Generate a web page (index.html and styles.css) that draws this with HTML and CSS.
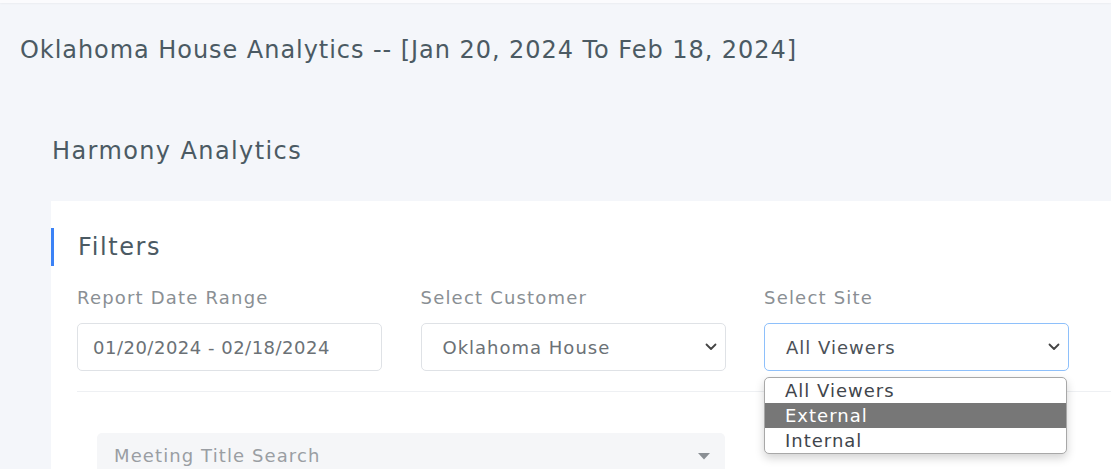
FILE: index.html
```html
<!DOCTYPE html>
<html>
<head>
<meta charset="utf-8">
<link rel="stylesheet" href="styles.css">
</head>
<body>
<div class="topline"></div>
<h1 class="page-title">Oklahoma House Analytics -- [Jan 20, 2024 To Feb 18, 2024]</h1>
<div class="section">
  <h2 class="section-title">Harmony Analytics</h2>
  <div class="card">
    <h3 class="card-title">Filters</h3>
    <div class="filters">
      <div class="field">
        <div class="label">Report Date Range</div>
        <div class="control date">01/20/2024 - 02/18/2024</div>
      </div>
      <div class="field">
        <div class="label">Select Customer</div>
        <div class="control select">
          <span class="sel-text">Oklahoma House</span>
          <svg class="chev" width="12" height="8" viewBox="0 0 12 8"><path d="M1.5 1.5 L6 6 L10.5 1.5" fill="none" stroke="#444" stroke-width="1.8" stroke-linecap="round" stroke-linejoin="round"/></svg>
        </div>
      </div>
      <div class="field site">
        <div class="label">Select Site</div>
        <div class="control select focused">
          <span class="sel-text">All Viewers</span>
          <svg class="chev" width="12" height="8" viewBox="0 0 12 8"><path d="M1.5 1.5 L6 6 L10.5 1.5" fill="none" stroke="#444" stroke-width="1.8" stroke-linecap="round" stroke-linejoin="round"/></svg>
        </div>
        <ul class="dropdown">
          <li>All Viewers</li>
          <li class="active">External</li>
          <li>Internal</li>
        </ul>
      </div>
    </div>
    <div class="divider"></div>
    <div class="search-row">
      <div class="search">
        <span class="placeholder">Meeting Title Search</span>
        <svg class="caret" width="12" height="7" viewBox="0 0 12 7"><path d="M0 0 L12 0 L6 6.5 Z" fill="#8a8f94"/></svg>
      </div>
    </div>
  </div>
</div>
</body>
</html>
```

FILE: styles.css
```css
* { box-sizing: border-box; }
html, body { margin: 0; padding: 0; }
body {
  background: #f4f6fa;
  font-family: "DejaVu Sans", "Open Sans", sans-serif;
  color: #4b5a63;
  width: 1111px;
  height: 469px;
  overflow: hidden;
}
.topline {
  height: 3px;
  background: #fbfbfd;
  box-shadow: 0 1px 2px rgba(0,0,0,0.04);
}
.page-title {
  margin: 0;
  padding: 32px 0 0 20px;
  font-size: 24px;
  letter-spacing: 0.95px;
  font-weight: 400;
  line-height: 30px;
  color: #4b5a63;
  white-space: nowrap;
}
.section {
  padding-left: 52px;
}
.section-title {
  margin: 0;
  padding-top: 71px;
  font-size: 24px;
  letter-spacing: 1.4px;
  font-weight: 400;
  line-height: 30px;
  color: #4b5a63;
}
.card {
  margin-top: 35px;
  margin-left: -1px;
  background: #fff;
  padding: 27px 0 0 0;
  height: 268px;
  overflow: hidden;
}
.card-title {
  margin: 0;
  border-left: 3px solid #3b82f6;
  padding-left: 24px;
  font-size: 24px;
  letter-spacing: 1.6px;
  font-weight: 400;
  line-height: 38px;
  color: #4b5a63;
}
.filters {
  display: grid;
  grid-template-columns: 305px 305px 305px;
  column-gap: 38.5px;
  padding-left: 26px;
  margin-top: 15px;
}
.field { position: relative; }
.label {
  font-size: 18px;
  letter-spacing: 1.2px;
  line-height: 34px;
  color: #8a8f94;
  white-space: nowrap;
}
.control {
  margin-top: 8px;
  height: 48px;
  border: 1px solid #dfe2e6;
  border-radius: 5px;
  display: flex;
  align-items: center;
  padding-left: 15px;
  font-size: 18px;
  letter-spacing: 1px;
  color: #6b7176;
  white-space: nowrap;
}
.date { letter-spacing: 0.5px; }
.select {
  justify-content: space-between;
  padding-left: 21px;
  padding-right: 8px;
}
.focused {
  border-color: #8ec0fb;
  color: #4b5158;
}
.dropdown {
  position: absolute;
  left: 0;
  top: 96px;
  width: 303px;
  margin: 0;
  padding: 0;
  list-style: none;
  background: #fff;
  border: 1px solid #a8a8a8;
  border-radius: 5px;
  box-shadow: 0 4px 10px rgba(0,0,0,0.18);
  overflow: hidden;
  font-size: 18px;
  letter-spacing: 1px;
  color: #3f454b;
}
.dropdown li {
  height: 25px;
  line-height: 25px;
  padding-left: 20px;
}
.dropdown li.active {
  background: #777777;
  color: #fff;
}
.divider {
  height: 1px;
  background: #eef0f3;
  margin: 20px 0 0 26px;
}
.search-row {
  padding: 41px 0 0 46px;
}
.search {
  width: 628px;
  height: 48px;
  background: #f5f6f8;
  border-radius: 5px;
  display: flex;
  align-items: center;
  justify-content: space-between;
  padding: 0 15px 4px 17px;
  font-size: 18px;
  letter-spacing: 1.1px;
  color: #9a9ea3;
}
.caret { margin-top: 2px; }
```
